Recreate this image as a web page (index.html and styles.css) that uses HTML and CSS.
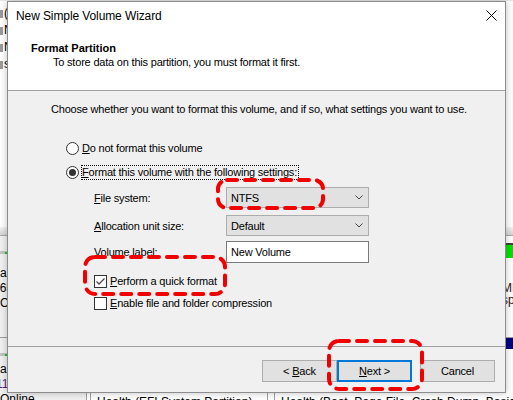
FILE: index.html
```html
<!DOCTYPE html>
<html>
<head>
<meta charset="utf-8">
<title>New Simple Volume Wizard</title>
<link rel="stylesheet" href="styles.css">
</head>
<body>
<div class="desk">
  <div class="list">
    <div class="list-row"><span class="ico"></span><span>(C:)</span></div>
    <div class="list-row"><span class="ico"></span><span>New Volume (D:)</span></div>
    <div class="list-row"><span class="ico"></span><span>New Volume (E:)</span></div>
    <div class="list-row"><span class="ico"></span><span>system Reserved</span></div>
  </div>
  <div class="splitter"></div>
  <div class="disk disk1">
    <div class="dinfo">
      <div class="dhead"><span class="dot"></span></div>
      <div class="dline cut8">Basic</div>
      <div class="dline cut7">465.76 GB</div>
      <div class="dline">Online</div>
    </div>
    <div class="dspace"></div>
    <div class="part part-green">
      <div class="phead"></div>
      <div class="ptext">MB</div>
      <div class="ptext">space</div>
    </div>
  </div>
  <div class="disk disk2">
    <div class="dinfo">
      <div class="dhead"><span class="dot"></span></div>
      <div class="dline cut8">Basic</div>
      <div class="dline cut5 purple">111.79 GB</div>
      <div class="dline online">Online</div>
    </div>
    <div class="part part-a">
      <div class="phead"></div>
      <div class="pbody">Health (EFI System Partition)</div>
    </div>
    <div class="part part-b">
      <div class="phead navy"></div>
      <div class="pbody">Health (Boot, Page File, Crash Dump, Basic Data Partition)</div>
    </div>
  </div>
</div>

<div class="dialog">
  <div class="top">
    <div class="titlebar">
      <span class="title">New Simple Volume Wizard</span>
      <svg class="close" width="11" height="11" viewBox="0 0 11 11"><path d="M0.5 0.5 L10.5 10.5 M10.5 0.5 L0.5 10.5" stroke="#000" stroke-width="1" fill="none"/></svg>
    </div>
    <div class="header">
      <div class="h-title">Format Partition</div>
      <div class="h-sub">To store data on this partition, you must format it first.</div>
    </div>
  </div>
  <div class="body">
    <p class="intro">Choose whether you want to format this volume, and if so, what settings you want to use.</p>
    <div class="radio-row r1"><span class="radio"></span><span class="rlabel"><u>D</u>o not format this volume</span></div>
    <div class="radio-row r2"><span class="radio on"></span><span class="rlabel focus"><u>F</u>ormat this volume with the following settings:</span></div>
    <div class="field f1"><span class="flabel"><u>F</u>ile system:</span><div class="combo"><span>NTFS</span><svg width="8" height="5" viewBox="0 0 8 5"><path d="M0.5 0.5 L4 4 L7.5 0.5" stroke="#444" fill="none"/></svg></div></div>
    <div class="field f2"><span class="flabel"><u>A</u>llocation unit size:</span><div class="combo"><span>Default</span><svg width="8" height="5" viewBox="0 0 8 5"><path d="M0.5 0.5 L4 4 L7.5 0.5" stroke="#444" fill="none"/></svg></div></div>
    <div class="field f3"><span class="flabel"><u>V</u>olume label:</span><div class="textbox">New Volume</div></div>
    <div class="check-row c1"><span class="check"><svg width="11" height="11" viewBox="0 0 11 11"><path d="M1.5 5.5 L4 8 L9.5 2.5" stroke="#4a4a4a" stroke-width="1.3" fill="none"/></svg></span><span><u>P</u>erform a quick format</span></div>
    <div class="check-row c2"><span class="check"></span><span><u>E</u>nable file and folder compression</span></div>
  </div>
  <div class="footer">
    <button class="btn">&lt; <u>B</u>ack</button>
    <button class="btn default"><u>N</u>ext &gt;</button>
    <button class="btn cancel">Cancel</button>
  </div>
</div>

<svg class="marks" width="513" height="400" viewBox="0 0 513 400">
  <rect x="218" y="180" width="105" height="28" rx="9" />
  <rect x="85" y="257" width="140" height="37" rx="10" />
  <rect x="329" y="341" width="93" height="48" rx="10" />
</svg>
</body>
</html>
```

FILE: styles.css
```css
* { box-sizing: border-box; }
html, body { margin: 0; padding: 0; }
body {
  width: 513px;
  height: 400px;
  overflow: hidden;
  position: relative;
  background: #fff;
  font-family: "Liberation Sans", Arial, sans-serif;
  font-size: 12px;
  color: #000;
}

/* ---------- backdrop (Disk Management window behind) ---------- */
.desk {
  width: 513px;
  height: 400px;
  display: flex;
  flex-direction: column;
  background: #fff;
  overflow: hidden;
}
.desk > * { flex-shrink: 0; }
.list {
  height: 227px;
  padding-top: 4px;
  border-top: 1px solid #eaeaea;
}
.list-row {
  height: 17px;
  line-height: 17px;
  display: flex;
  align-items: center;
  gap: 1px;
  white-space: nowrap;
}
.list-row .ico {
  width: 3px;
  height: 8px;
  background: #9a9a9a;
}
.splitter {
  height: 9px;
  background: linear-gradient(#f2f2f2, #d4d4d4);
  border-bottom: 1px solid #a8a8a8;
}
.disk {
  display: flex;
  white-space: nowrap;
}
.disk1 { height: 102px; border-bottom: 1px solid #a0a0a0; }
.desk > .disk2 { flex: 1 1 0; min-height: 0; overflow: hidden; }
.dinfo {
  width: 87px;
  background: #f0f0f0;
  border-right: 1px solid #a0a0a0;
  overflow: hidden;
}
.dhead {
  margin-top: 15px;
  height: 3px;
  background: #c4c4c4;
  display: flex;
  align-items: center;
}
.dot {
  width: 2px;
  height: 2px;
  margin-left: 5px;
  background: #20c020;
}
.dline { line-height: 15px; }
.disk1 .dhead + .dline { margin-top: 12px; }
.disk2 .dhead + .dline { margin-top: 6px; }
.cut8 { margin-left: -8px; }
.cut7 { margin-left: -7px; }
.cut5 { margin-left: -4px; }
.purple { color: #5a1a7a; }
.online { margin-top: 0; }
.dspace { flex: 1; }
.part {
  border-left: 1px solid #a0a0a0;
  overflow: hidden;
}
.part-green {
  width: 13px;
  padding-top: 7px;
}
.part-green .phead {
  height: 15px;
  background: #00e000;
  border-top: 2px solid #404040;
}
.ptext { line-height: 12px; padding-left: 1px; color: #3a1010; }
.part-green .phead + .ptext { margin-top: 24px; }
.part-a {
  margin-left: 3px;
  width: 178px;
  border-right: 1px solid #a0a0a0;
}
.part-b {
  margin-left: 6px;
  flex: 1;
}
.phead {
  height: 11px;
  background: #000080;
}
.pbody {
  padding-left: 6px;
  margin-top: 46px;
  line-height: 15px;
}

/* ---------- dialog ---------- */
.dialog {
  position: absolute;
  left: 7px;
  top: 1px;
  width: 499px;
  height: 392px;
  border: 1px solid #8c8c8c;
  background: #f0f0f0;
  box-shadow: 0 0 7px rgba(0, 0, 0, 0.25);
  display: flex;
  flex-direction: column;
  font-size: 11px;
  letter-spacing: -0.2px;
}
.top {
  height: 89px;
  background: #fff;
  border-bottom: 1px solid #a0a0a0;
}
.titlebar {
  height: 29px;
  padding: 7px 8px 0 8px;
  display: flex;
  justify-content: space-between;
  align-items: flex-start;
}
.title { line-height: 15px; font-size: 12px; letter-spacing: -0.1px; }
.close { margin-top: 1px; }
.header { padding: 10px 0 0 23px; }
.h-title { font-weight: bold; line-height: 14px; letter-spacing: 0; }
.h-sub { line-height: 14px; padding-left: 22px; }

.body {
  height: 256px;
  border-bottom: 1px solid #a0a0a0;
}
.intro {
  margin: 11px 0 0 43px;
  line-height: 15px;
  white-space: nowrap;
}
.radio-row {
  display: flex;
  align-items: flex-start;
  height: 15px;
  padding-left: 58px;
}
.r1 { margin-top: 24px; }
.r2 { margin-top: 9px; }
.radio {
  width: 13px;
  height: 13px;
  margin-top: 1px;
  border: 1px solid #333;
  border-radius: 50%;
  background: #fff;
  display: flex;
  align-items: center;
  justify-content: center;
}
.radio.on::after {
  content: "";
  width: 7px;
  height: 7px;
  border-radius: 50%;
  background: #333;
}
.rlabel {
  margin-left: 2px;
  line-height: 13px;
  border: 1px solid transparent;
  padding: 0 1px 0 0;
  white-space: nowrap;
}
.rlabel.focus { border: 1px dotted #000; }

.field {
  display: flex;
  align-items: center;
  padding-left: 86px;
}
.f1 { margin-top: 7px; height: 21px; }
.f2 { margin-top: 7px; height: 21px; }
.f3 { margin-top: 5px; height: 22px; }
.flabel { width: 132px; white-space: nowrap; }
.combo {
  width: 143px;
  height: 21px;
  background: #e1e1e1;
  border: 1px solid #adadad;
  display: flex;
  align-items: center;
  justify-content: space-between;
  padding: 0 5px 0 4px;
}
.textbox {
  width: 143px;
  height: 22px;
  background: #fff;
  border: 1px solid #7a7a7a;
  display: flex;
  align-items: center;
  padding-left: 4px;
}

.check-row {
  display: flex;
  align-items: flex-start;
  height: 13px;
  padding-left: 86px;
  line-height: 13px;
  white-space: nowrap;
}
.c1 { margin-top: 12px; }
.c2 { margin-top: 9px; }
.check {
  width: 13px;
  height: 13px;
  border: 1px solid #333;
  background: #fff;
  margin-right: 3px;
  display: flex;
}

.footer {
  flex: 1;
  display: flex;
  justify-content: flex-end;
  align-items: flex-start;
  padding: 13px 10px 0 0;
}
.btn {
  width: 75px;
  height: 22px;
  padding: 0;
  background: #e1e1e1;
  border: 1px solid #adadad;
  font-family: "Liberation Sans", Arial, sans-serif;
  font-size: 11px;
  letter-spacing: -0.2px;
  color: #000;
  line-height: 18px;
}
.btn.default { border: 2px solid #0078d7; }
.btn.cancel { margin-left: 8px; }

/* ---------- red annotation marks ---------- */
.marks {
  position: absolute;
  left: 0;
  top: 0;
  pointer-events: none;
}
.marks rect {
  fill: none;
  stroke: #f20000;
  stroke-width: 4;
  stroke-dasharray: 10 8;
  stroke-linecap: round;
}
```
